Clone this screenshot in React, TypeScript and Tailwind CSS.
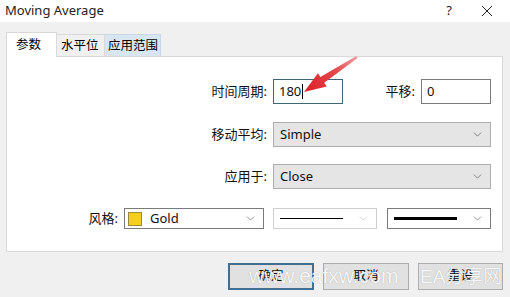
import { ChevronDown } from 'lucide-react'

const FONT = '"Segoe UI", "Noto Sans", "Noto Sans CJK SC", sans-serif'

function Select({ value, width, swatch }: { value: string; width: string; swatch?: boolean }) {
  return (
    <div
      className={`${width} h-[25px] flex items-center bg-[#e5e5e5] border border-[#adadad] pl-[6px] pr-[6px] text-[13px] text-[#111]`}
    >
      {swatch && <span className="w-[14px] h-[14px] bg-[#f5cf1a] border border-[#9a8a3a] mr-[8px]" />}
      <span className="flex-1">{value}</span>
      <ChevronDown size={13} strokeWidth={1.3} className="text-[#555]" />
    </div>
  )
}

function LineSelect({ width, thick, disabled }: { width: string; thick?: boolean; disabled?: boolean }) {
  return (
    <div
      className={`${width} h-[21px] flex items-center bg-white border ${disabled ? 'border-[#cfcfcf]' : 'border-[#7a7a7a]'} pl-[6px] pr-[6px]`}
    >
      <span className={`flex-1 mr-[14px] ${thick ? 'h-[3px]' : 'h-[1px]'} bg-black`} />
      <ChevronDown size={13} strokeWidth={1.3} className={disabled ? 'text-[#c0c0c0]' : 'text-[#666]'} />
    </div>
  )
}

export default function App() {
  return (
    <div className="relative w-[510px] h-[297px] bg-[#f0f0f0] overflow-hidden" style={{ fontFamily: FONT }}>
      {/* title bar */}
      <div className="h-[22px] bg-white flex items-center pl-[5px] text-[13px] text-[#222]">
        <span className="flex-1">Moving Average</span>
        <span className="w-[20px] text-center mr-[22px] text-[13px]">?</span>
        <svg width="12" height="12" viewBox="0 0 12 12" className="mr-[17px]">
          <path d="M1 1L11 11M11 1L1 11" stroke="#222" strokeWidth="1" />
        </svg>
      </div>

      {/* tabs */}
      <div className="flex items-end h-[34px] pl-[6px]">
        <div className="w-[51px] h-[25px] bg-white border border-b-0 border-[#d9d9d9] text-[12.5px] pl-[9px] pt-[3px] relative top-[1px] z-10">
          参数
        </div>
        <div className="w-[48px] h-[22px] border border-b-0 border-l-0 border-[#d9d9d9] text-[12.5px] pl-[4px] pt-[2px]">
          水平位
        </div>
        <div className="w-[56px] h-[22px] bg-[#d8e6f2] border border-b-0 border-l-0 border-[#c7d8ea] text-[12.5px] pl-[3px] pt-[2px]">
          应用范围
        </div>
      </div>

      {/* panel */}
      <div className="ml-[6px] w-[497px] h-[196px] bg-white border border-[#d9d9d9] text-[13px] text-[#111]">
        <div className="flex items-center mt-[22px]">
          <span className="w-[260px] text-right">时间周期:</span>
          <div className="ml-[6px] w-[70px] h-[25px] border border-[#3c6776] flex items-center pl-[5px]">
            180<span className="w-[1px] h-[15px] bg-black ml-[1px]" />
          </div>
          <span className="w-[72px] text-right">平移:</span>
          <div className="ml-[6px] w-[70px] h-[25px] border border-[#7a7a7a] flex items-center pl-[5px]">0</div>
        </div>

        <div className="flex items-center mt-[18px]">
          <span className="w-[260px] text-right">移动平均:</span>
          <div className="ml-[6px]">
            <Select value="Simple" width="w-[218px]" />
          </div>
        </div>

        <div className="flex items-center mt-[17px]">
          <span className="w-[260px] text-right">应用于:</span>
          <div className="ml-[6px]">
            <Select value="Close" width="w-[218px]" />
          </div>
        </div>

        <div className="flex items-center mt-[19px]">
          <span className="w-[111px] text-right">风格:</span>
          <div className="ml-[6px] w-[140px] h-[21px] flex items-center bg-white border border-[#7a7a7a] pl-[3px] pr-[6px] text-[13px]">
            <span className="w-[14px] h-[14px] bg-[#f5cf1a] border border-[#9a8a3a] mr-[8px]" />
            <span className="flex-1">Gold</span>
            <ChevronDown size={13} strokeWidth={1.3} className="text-[#666]" />
          </div>
          <div className="ml-[9px]">
            <LineSelect width="w-[104px]" disabled />
          </div>
          <div className="ml-[10px]">
            <LineSelect width="w-[104px]" thick />
          </div>
        </div>
      </div>

      {/* buttons */}
      <div className="flex justify-end gap-[9px] pr-[7px] mt-[11px] text-[12.5px] text-[#111]">
        <button className="w-[86px] h-[27px] bg-[#e1e1e1] border-2 border-[#3f6f95]">确定</button>
        <button className="w-[86px] h-[27px] bg-[#e1e1e1] border border-[#adadad]">取消</button>
        <button className="w-[85px] h-[27px] bg-[#e1e1e1] border border-[#adadad]">重设</button>
      </div>

      {/* red arrow annotation */}
      <svg className="absolute left-0 top-0 pointer-events-none" width="510" height="297">
        <defs>
          <linearGradient id="ar" x1="357" y1="57" x2="304" y2="92" gradientUnits="userSpaceOnUse">
            <stop offset="0" stopColor="#eea0a0" />
            <stop offset="0.4" stopColor="#e4474c" />
            <stop offset="1" stopColor="#dd1f27" />
          </linearGradient>
        </defs>
        <path
          d="M304 92 L317.9 73.2 L320.4 77 L356.3 56 L357.7 58 L324.2 82.8 L326.7 86.6 Z"
          fill="url(#ar)"
        />
      </svg>

      {/* watermark */}
      <div
        className="absolute left-[249px] top-[263px] text-[21px] leading-[26px] text-white/90 whitespace-nowrap pointer-events-none"
        style={{ fontFamily: '"Liberation Sans", sans-serif', textShadow: '0 0 1px rgba(0,0,0,0.3)' }}
      >
        www.eafxw.com
      </div>
      <div
        className="absolute left-[420px] top-[264px] text-[19px] leading-[26px] text-white/90 whitespace-nowrap pointer-events-none"
        style={{ fontFamily: '"Liberation Sans", "Noto Sans CJK SC", sans-serif', textShadow: '0 0 1px rgba(0,0,0,0.3)' }}
      >
        EA分享网
      </div>
    </div>
  )
}
